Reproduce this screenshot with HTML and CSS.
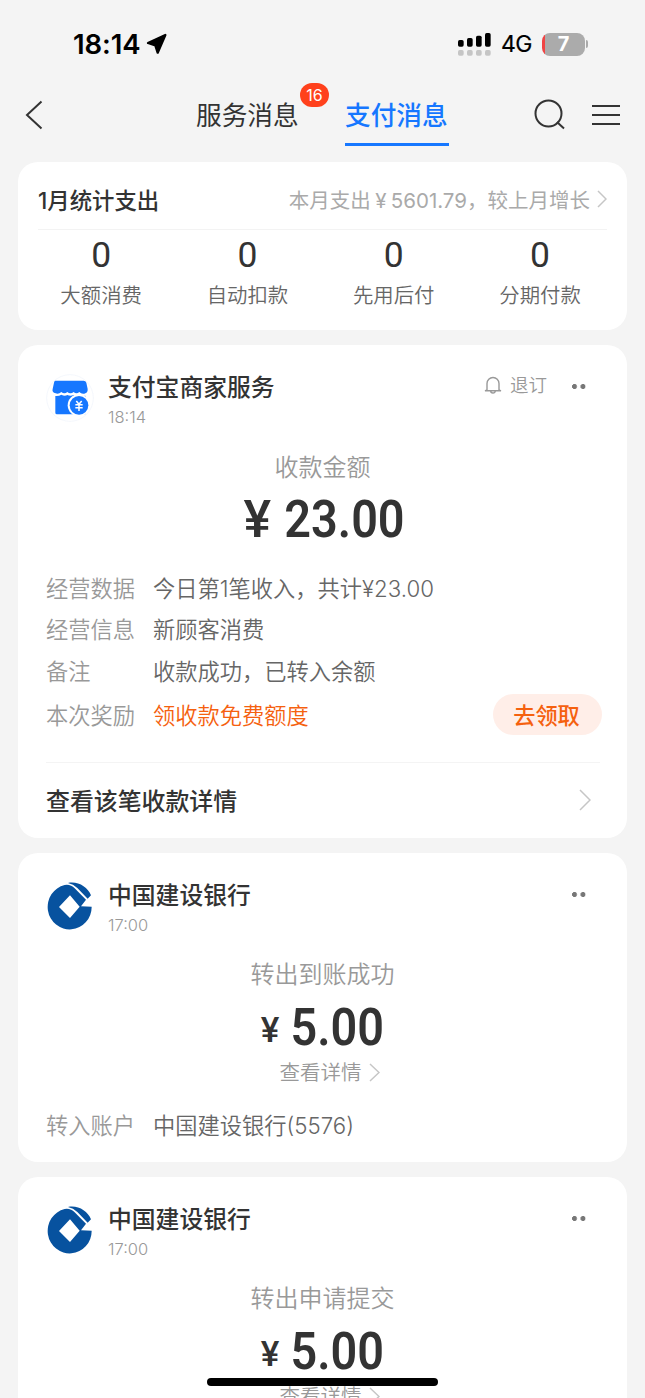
FILE: index.html
```html
<!DOCTYPE html>
<html lang="zh-CN">
<head>
<meta charset="utf-8">
<title>支付消息</title>
<link rel="stylesheet" href="styles.css">
</head>
<body>
<div class="screen">
  <header class="status">
    <span class="clock">18:14</span>
    <svg class="locate" width="22" height="22" viewBox="0 0 66 66"><path d="M58 6 6 30 28 37 35 59Z" fill="#000" stroke="#000" stroke-width="7" stroke-linejoin="round"/></svg>
    <svg class="signal" width="33" height="23" viewBox="0 0 99 69"><g fill="#000"><rect y="21" width="17" height="20" rx="5"/><rect x="27" y="15" width="17" height="26" rx="5"/><rect x="54" y="8" width="17" height="33" rx="5"/><rect x="81" width="17" height="41" rx="5"/></g><g fill="#c5c5c5"><rect y="51" width="17" height="17" rx="5"/><rect x="27" y="51" width="17" height="17" rx="5"/><rect x="54" y="51" width="17" height="17" rx="5"/><rect x="81" y="51" width="17" height="17" rx="5"/></g></svg>
    <span class="network">4G</span>
    <span class="battery">7</span><span class="battery-tip"></span>
  </header>

  <nav class="nav">
    <svg class="back" width="18" height="30" viewBox="0 0 18 30"><path d="M16.5 1.5 2 15l14.500 13.500"/></svg>
    <div class="tab">服务消息<span class="badge">16</span></div>
    <div class="tab tab-active">支付消息</div>
    <svg class="search" width="32" height="32" viewBox="0 0 32 32"><circle cx="14.500" cy="14.500" r="13"/><path d="m23 23 7 6.500"/></svg>
    <svg class="menu" width="28" height="22" viewBox="0 0 28 22"><path d="M0 2h28M0 11h28M0 20h28"/></svg>
  </nav>

  <main class="feed">
    <section class="card stats">
      <div class="stats-head">
        <h2>1月统计支出</h2>
        <span class="summary">本月支出<i class="yen">¥</i>5601.79，较上月增长</span>
        <svg class="chevron" width="10" height="18" viewBox="0 0 10 18"><path d="m1 1 8 8-8 8"/></svg>
      </div>
      <div class="stats-grid">
        <div class="stat"><b>0</b><span>大额消费</span></div>
        <div class="stat"><b>0</b><span>自动扣款</span></div>
        <div class="stat"><b>0</b><span>先用后付</span></div>
        <div class="stat"><b>0</b><span>分期付款</span></div>
      </div>
    </section>

    <section class="card merchant">
      <div class="card-head">
        <svg class="logo" width="48" height="48" viewBox="0 0 144 144"><circle cx="72" cy="72" r="70" fill="#fff" stroke="#eef3fa" stroke-width="2"/><path fill="#1677ff" d="M28 20H113Q119 20 121 26L125 45Q126 57 115 59Q106 61 100 54Q91 62 83 54Q73 62 64 54Q55 62 46 54Q38 61 29 58Q17 55 20 45L24 26Q25 20 28 20Z"/><path fill="#1677ff" d="M28 66Q39 67 46 62Q56 68 64 63Q73 68 83 63Q91 68 99 64Q106 68 118 65V121H33Q28 121 28 116Z"/><circle cx="98" cy="94" r="33" fill="#fff"/><circle cx="99" cy="94" r="28" fill="#1677ff"/><path d="m91 81 8 10 8-10M99 91v20M88 92h22M88 101h22" fill="none" stroke="#fff" stroke-width="4.500"/></svg>
        <div class="who"><h3>支付宝商家服务</h3><time>18:14</time></div>
        <svg class="bell" width="18" height="18" viewBox="0 0 18 18"><path d="M3 14V7.500a6 6 0 0 1 12 0V14l2 .8H1ZM6.700 15a2.300 2 0 0 0 4.600 0"/></svg>
        <span class="unsub">退订</span>
        <span class="dots"></span>
      </div>
      <p class="caption">收款金额</p>
      <p class="amount"><span class="currency">¥</span><span class="figure">23.00</span></p>
      <dl class="details">
        <div><dt>经营数据</dt><dd>今日第1笔收入，共计¥23.00</dd></div>
        <div><dt>经营信息</dt><dd>新顾客消费</dd></div>
        <div><dt>备注</dt><dd>收款成功，已转入余额</dd></div>
        <div class="reward"><dt>本次奖励</dt><dd>领收款免费额度</dd><button>去领取</button></div>
      </dl>
      <div class="more">查看该笔收款详情<svg class="chevron" width="12" height="22" viewBox="0 0 12 22"><path d="m1 1 10 10L1 21"/></svg></div>
    </section>

    <section class="card bank">
      <div class="card-head">
        <svg class="logo" width="48" height="48" viewBox="108 98 144 144"><path fill="#07529f" fill-rule="evenodd" d="M245 172A66 67.500 0 1 1 164 107Q182 104 194 117L228 151 213 171ZM180 138 147 173 180 206 209 172Z"/><path fill="#07529f" d="M174 101C204 95 233 113 243 138L233 148 202 116Q190 104 174 101Z"/></svg>
        <div class="who"><h3>中国建设银行</h3><time>17:00</time></div>
        <span class="dots"></span>
      </div>
      <p class="caption">转出到账成功</p>
      <p class="amount small-yen"><span class="currency">¥</span><span class="figure">5.00</span></p>
      <p class="view">查看详情<svg class="chevron" width="11" height="19" viewBox="0 0 11 19"><path d="m1 1 9 8.500L1 18"/></svg></p>
      <dl class="details"><div><dt>转入账户</dt><dd>中国建设银行(5576)</dd></div></dl>
    </section>

    <section class="card bank">
      <div class="card-head">
        <svg class="logo" width="48" height="48" viewBox="108 98 144 144"><path fill="#07529f" fill-rule="evenodd" d="M245 172A66 67.500 0 1 1 164 107Q182 104 194 117L228 151 213 171ZM180 138 147 173 180 206 209 172Z"/><path fill="#07529f" d="M174 101C204 95 233 113 243 138L233 148 202 116Q190 104 174 101Z"/></svg>
        <div class="who"><h3>中国建设银行</h3><time>17:00</time></div>
        <span class="dots"></span>
      </div>
      <p class="caption">转出申请提交</p>
      <p class="amount small-yen"><span class="currency">¥</span><span class="figure">5.00</span></p>
      <p class="view">查看详情<svg class="chevron" width="11" height="19" viewBox="0 0 11 19"><path d="m1 1 9 8.500L1 18"/></svg></p>
    </section>
  </main>
  <div class="home-bar"></div>
</div>
</body>
</html>
```

FILE: styles.css
```css
* { box-sizing: border-box; margin: 0; padding: 0; }
body {
  background: #f4f4f4;
  color: #333;
  font-family: Inter, "Noto Sans CJK SC", sans-serif;
  font-weight: 350;
  overflow: hidden;
}
svg { display: block; flex: none; }
.screen { position: relative; width: 645px; height: 1398px; overflow: hidden; }

.status { display: flex; align-items: center; height: 88px; padding: 0 57px 0 73px; color: #000; }
.clock { width: 73px; font-size: 27.5px; font-weight: 600; letter-spacing: -.1px; white-space: nowrap; }
.signal { margin: 0 10px 0 auto; }
.network { width: 41px; font-size: 23px; font-weight: 400; letter-spacing: -.5px; -webkit-text-stroke: .2px #000; }
.battery {
  width: 43px; height: 23px; border-radius: 8px;
  background: linear-gradient(90deg, #f04444 3px, #ababab 3px);
  color: #fff; font-size: 20px; font-weight: 700; line-height: 23px; text-align: center;
}
.battery-tip { width: 2px; height: 8px; margin-left: 1px; border-radius: 0 3px 3px 0; background: #aaa; }

.nav { display: flex; align-items: center; height: 74px; padding: 0 25px; }
.nav svg { fill: none; stroke: #333; stroke-width: 2; margin-top: -21px; }
.tab { position: relative; height: 58px; margin-top: -16px; font-size: 25.7px; line-height: 55px; font-weight: 400; white-space: nowrap; }
.back + .tab { margin-left: 153px; }
.tab-active { width: 104px; margin-left: 46px; border-bottom: 3px solid #1677ff; color: #1677ff; font-weight: 500; }
.tab:not(.tab-active) { width: 103px; }
.badge {
  position: absolute; left: 104px; top: -5px; width: 29px; height: 24px;
  border-radius: 12px; background: #ff411c; color: #fff;
  font-size: 16px; line-height: 24px; text-align: center;
}
.search { margin-left: 85px; }
.menu { margin-left: auto; }

.feed { display: flex; flex-direction: column; gap: 15px; padding: 0 18px; }
.card { flex: none; border-radius: 20px; background: #fff; }
.chevron { fill: none; stroke: #c6c6c6; stroke-width: 1.5; }

.stats { height: 168px; padding: 0 20px; }
.stats-head { display: flex; align-items: center; height: 68px; padding-top: 7px; border-bottom: 1px solid #f3f3f3; }
.stats-head h2 { margin-right: auto; font-size: 22.4px; font-weight: 500; }
.summary { color: #aaa; font-size: 20.5px; font-weight: 375; white-space: nowrap; }
.yen { display: inline-block; width: 20px; font-style: normal; text-align: center; }
.stats .chevron { margin-left: 7px; }
.stats-grid { display: grid; grid-template-columns: repeat(4, 146.3px); margin-left: -10px; }
.stat { display: flex; flex-direction: column; align-items: center; }
.stat b { height: 50px; font: 400 35.5px/51px Roboto, sans-serif; }
.stat span { color: #666; font-size: 20.4px; line-height: 31px; }

.card-head { display: flex; height: 100px; padding: 29px 41px 0 28px; }
.who { margin: -5px auto 0 14px; }
.who h3 { height: 36px; font-size: 23.8px; line-height: 37px; font-weight: 500; white-space: nowrap; }
.who time { display: block; color: #999; font-size: 16.500px; line-height: 24px; }
.bell { margin: 2px 8px 0 -1px; fill: none; stroke: #999; stroke-width: 1.4; }
.unsub { margin-top: -2px; color: #999; font-size: 18.500px; line-height: 26px; }
.dots { width: 14px; height: 5px; margin-top: 10px; background: radial-gradient(circle at 2.5px 2.5px, #777 2.2px, transparent 2.8px) 0 0 / 8.500px 5px; }
.unsub + .dots { margin-left: 25px; }
.caption { height: 43px; color: #999; font-size: 24px; line-height: 45px; text-align: center; }
.amount { display: flex; justify-content: center; height: 61px; padding-left: 3px; font-family: Roboto, sans-serif; font-size: 52px; line-height: 63px; font-weight: 600; }
.currency { margin-right: 13px; font-weight: 500; }
.figure { margin-left: -13px; transform: scaleX(.9); transform-origin: right; }
.small-yen { padding-left: 0; }
.small-yen .currency { font-size: 35px; margin-right: 11px; }
.small-yen .figure { margin-left: -10px; }
.details { padding: 17px 25px 0 28px; }
.details > div { display: flex; align-items: center; height: 41.6px; font-size: 22.25px; }
.details dt { width: 107px; color: #999; }
.details dd { color: #666; white-space: nowrap; }
.details .reward { height: 47px; }
.reward dd { color: #f5610f; }
.reward button { width: 109px; height: 41px; margin-left: auto; border: 0; border-radius: 21px; background: #ffeee8; color: #f5610f; font: 500 22.2px Inter, "Noto Sans CJK SC", sans-serif; padding-right: 2px; }
.merchant { height: 493px; }
.more { display: flex; align-items: center; justify-content: space-between; height: 75px; margin: 24px 27px 0 28px; padding-right: 9px; border-top: 1px solid #f4f4f4; font-size: 23.900px; font-weight: 500; }
.bank { height: 309px; }
.bank .card-head { height: 99px; }
.bank .amount { height: 64px; line-height: 66px; }
.bank .small-yen .currency { line-height: 71px; }
.view { display: flex; align-items: center; justify-content: center; gap: 7px; height: 27px; color: #999; font-size: 20.500px; line-height: 27px; padding-left: 14px; }
.bank .details { padding-top: 17px; }
.home-bar { position: absolute; left: 207px; top: 1378px; width: 231px; height: 8px; border-radius: 4px; background: #000; }
```
